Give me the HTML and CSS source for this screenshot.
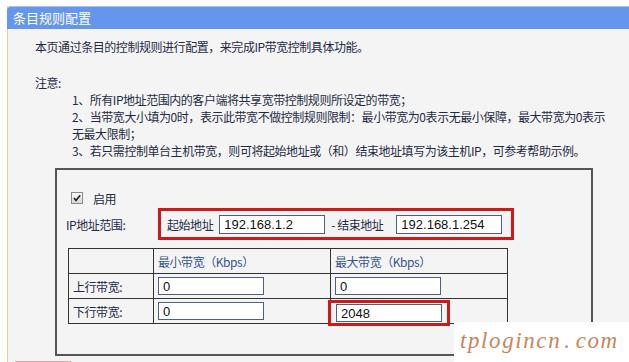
FILE: index.html
```html
<!DOCTYPE html>
<html lang="zh-CN">
<head>
    <meta charset="UTF-8">
    <title>条目规则配置</title>
    <link rel="stylesheet" href="styles.css">
</head>
<body>
    <div class="panel">
        <div class="panel-title">条目规则配置</div>
        <div class="panel-body">
            <p class="intro">本页通过条目的控制规则进行配置，来完成IP带宽控制具体功能。</p>
            <p class="note-head">注意:</p>
            <div class="notes">
                <p>1、所有IP地址范围内的客户端将共享宽带控制规则所设定的带宽；</p>
                <p>2、当带宽大小填为0时，表示此带宽不做控制规则限制：最小带宽为0表示无最小保障，最大带宽为0表示<br>无最大限制；</p>
                <p>3、若只需控制单台主机带宽，则可将起始地址或（和）结束地址填写为该主机IP，可参考帮助示例。</p>
            </div>

            <div class="rule-box">
                <div class="enable-row">
                    <span class="check">
                        <svg width="10" height="10" viewBox="0 0 10 10"><path d="M2 5 L4 7.5 L8.2 2.3" fill="none" stroke="#222" stroke-width="1.7"/></svg>
                    </span>
                    <span>启用</span>
                </div>
                <div class="ip-row">
                    <span class="ip-label">IP地址范围:</span>
                    <div class="ip-range mark">
                        <span>起始地址</span>
                        <input class="field ip" type="text" value="192.168.1.2">
                        <span class="dash">- 结束地址</span>
                        <input class="field ip" type="text" value="192.168.1.254">
                    </div>
                </div>
                <table class="bw-table">
                    <tr>
                        <td class="c1"></td>
                        <td class="c2 head">最小带宽（Kbps）</td>
                        <td class="c3 head">最大带宽（Kbps）</td>
                    </tr>
                    <tr>
                        <td>上行带宽:</td>
                        <td><input class="field bw" type="text" value="0"></td>
                        <td><input class="field bw" type="text" value="0"></td>
                    </tr>
                    <tr>
                        <td>下行带宽:</td>
                        <td><input class="field bw" type="text" value="0"></td>
                        <td><div class="mark bw-mark"><input class="field bw" type="text" value="2048"></div></td>
                    </tr>
                </table>
            </div>
            <div class="actions"><span class="btn"></span></div>
        </div>
    </div>

    <div class="watermark"><span>tplogincn</span><span class="dot">.</span><span>com</span></div>
</body>
</html>
```

FILE: styles.css
```css
html, body {
    margin: 0;
    padding: 0;
}
body {
    background: #fff;
    padding: 6px 0 0 7px;
    height: 362px;
    overflow: hidden;
    font-family: "Noto Sans CJK SC", "Noto Sans", sans-serif;
    font-size: 12px;
    letter-spacing: -0.45px;
    color: #1f2b45;
}
p {
    margin: 0;
}
.panel {
    background: #f4f4f4;
    border-left: 1px solid #e8cd9c;
}
.panel-title {
    height: 22px;
    line-height: 22px;
    background: #6496ee;
    border-top: 1px solid #a9c2ee;
    border-radius: 4px 0 0 0;
    margin-left: -1px;
    padding-left: 6px;
    color: #fff;
    font-size: 13px;
    letter-spacing: 0;
}
.panel-body {
    padding: 9px 0 0 27px;
}
.intro, .note-head, .notes p {
    line-height: 17px;
}
.note-head {
    margin-top: 19px;
}
.notes {
    padding-left: 37px;
    white-space: nowrap;
}
.rule-box {
    margin: 9px 0 0 20px;
    border: 2px solid #555;
    padding: 22px 0 0 9px;
    width: 525px;
    height: 162px;
}
.enable-row {
    display: flex;
    align-items: center;
    gap: 10px;
    padding-left: 5px;
    height: 12px;
}
.check {
    display: inline-flex;
    width: 10px;
    height: 10px;
    border: 1px solid #8a8a8a;
    background: linear-gradient(#fafafa, #d8d8d8);
}
.ip-row {
    display: flex;
    align-items: center;
    margin-top: 4px;
}
.ip-label {
    width: 92px;
}
.mark {
    border: 3px solid #cc1a1a;
}
.ip-range {
    display: flex;
    align-items: center;
    height: 26px;
    padding: 0 9px 0 6px;
}
.ip-range .dash {
    margin: 0 7px 0 6px;
}
.field {
    box-sizing: border-box;
    height: 19px;
    border: 1px solid #4f5f7f;
    background: #fff;
    font-family: "Liberation Sans", Arial, sans-serif;
    font-size: 13px;
    letter-spacing: 0;
    color: #111;
    padding: 0 4px;
    margin: 0;
    outline: none;
}
.field.ip {
    width: 106px;
    margin-left: 6px;
}
.bw-table {
    border-collapse: collapse;
    margin: 8px 0 0 2px;
    width: 440px;
}
.bw-table td {
    border: 1px solid #333;
    height: 24px;
    padding: 0 0 0 4px;
    vertical-align: middle;
}
.bw-table .c1 {
    width: 80px;
}
.bw-table .c2, .bw-table .c3 {
    width: 172px;
}
.bw-table .head {
    color: #36548e;
}
.field.bw {
    width: 106px;
    height: 18px;
}
.bw-mark {
    display: inline-block;
    margin: 0 0 -4px -7px;
    padding: 1px 5px;
}
.actions {
    padding-top: 5px;
}
.btn {
    display: block;
    margin-left: -20px;
    width: 54px;
    height: 12px;
    border: 1px solid #e5a8a8;
    background: #f6dede;
}
.watermark {
    position: absolute;
    left: 454px;
    top: 322px;
    width: 175px;
    height: 40px;
    background: #fff;
    color: #c9845a;
    font-family: "Liberation Serif", serif;
    font-style: italic;
    font-size: 23px;
    line-height: 38px;
    padding-left: 6px;
    box-sizing: border-box;
    letter-spacing: 1.6px;
    white-space: nowrap;
}
.watermark .dot {
    margin: 0 4px 0 3px;
}
```
